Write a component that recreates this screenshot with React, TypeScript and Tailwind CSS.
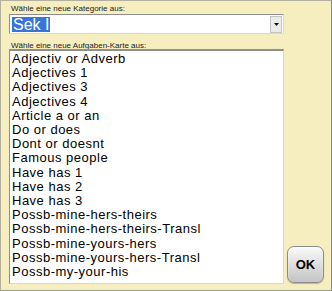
const items = [
  "Adjectiv or Adverb",
  "Adjectives 1",
  "Adjectives 3",
  "Adjectives 4",
  "Article a or an",
  "Do or does",
  "Dont or doesnt",
  "Famous people",
  "Have has 1",
  "Have has 2",
  "Have has 3",
  "Possb-mine-hers-theirs",
  "Possb-mine-hers-theirs-Transl",
  "Possb-mine-yours-hers",
  "Possb-mine-yours-hers-Transl",
  "Possb-my-your-his",
];

export default function App() {
  return (
    <div className="w-[332px] h-[291px] bg-[#f6eebf] border border-[#b4b0a0] border-r-[#8c8a80] border-b-[#9c9a90] flex items-end font-['Liberation_Sans',Arial,sans-serif]">
      <div className="flex flex-col self-stretch pl-[8px] pt-[3px] w-[283px]">
        <div className="text-[8px] leading-[9px] text-[#222] pl-[2px]">Wähle eine neue Kategorie aus:</div>
        <div className="mt-[1px] h-[20px] bg-white border border-[#8e8e8e] border-r-[#d8d8d8] border-b-[#d8d8d8] flex items-center pl-[2px] pr-[1px]">
          <span className="bg-[#3875d7] text-white text-[16px] leading-[16px] h-[15px] px-[1px]">Sek I</span>
          <div className="flex-1" />
          <div className="w-[12px] h-[17px] bg-[#ecece8] border border-[#c4c4c4] flex items-center justify-center">
            <svg width="5" height="3" viewBox="0 0 5 3">
              <path d="M0 0h5L2.5 3z" fill="#111" />
            </svg>
          </div>
        </div>
        <div className="mt-[7px] text-[8px] leading-[9px] text-[#222] pl-[2px]">Wähle eine neue Aufgaben-Karte aus:</div>
        <div className="mt-[-1px] h-[235px] bg-white border border-[#8e8e8e] border-t-2 border-r-[#d8d8d8] border-b-[#d8d8d8] pl-[2px] pt-[1px] overflow-hidden">
          {items.map((t) => (
            <div key={t} className="text-[13px] leading-[14.2px] text-black whitespace-nowrap tracking-[0.5px]">
              {t}
            </div>
          ))}
        </div>
      </div>
      <div className="flex-1 flex justify-start pl-[3px] pb-[7px]">
        <button className="w-[37px] h-[37px] rounded-[7px] border border-[#8a8a8a] bg-gradient-to-b from-[#fafafa] via-[#dedede] to-[#c4c4c4] shadow-[inset_0_1px_2px_rgba(255,255,255,0.9),0_1px_1px_rgba(0,0,0,0.25)] text-[13px] font-bold text-black">
          OK
        </button>
      </div>
    </div>
  );
}
